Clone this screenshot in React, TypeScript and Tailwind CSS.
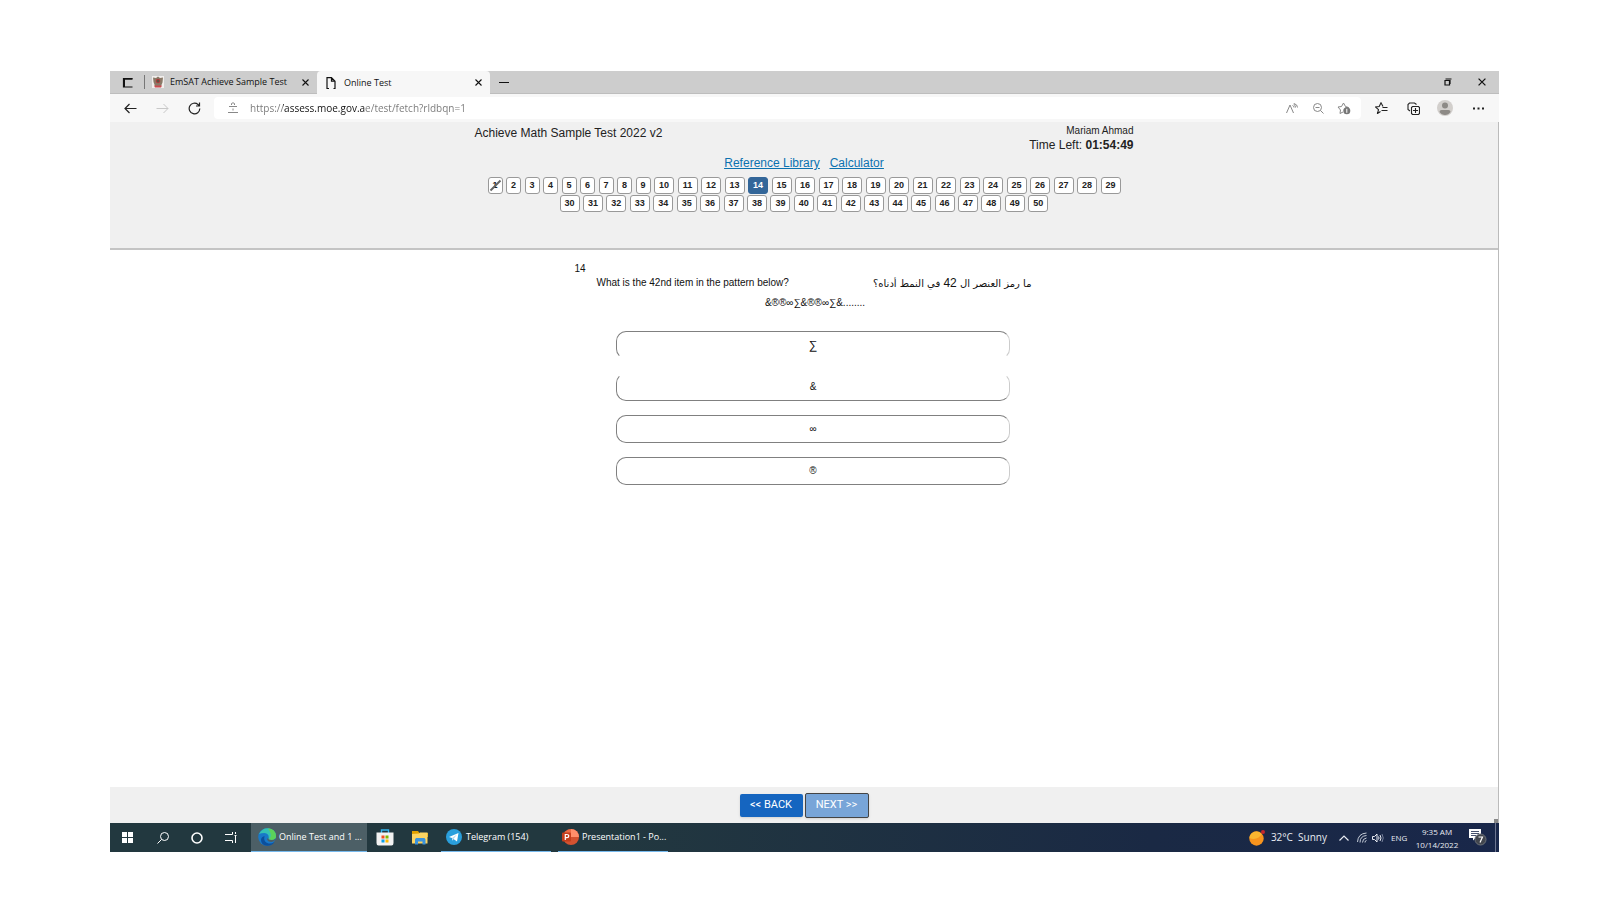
import { useState } from 'react';

const ANSWERS = ['∑', '&', '∞', '®'];

const range = (from: number, to: number) =>
  Array.from({ length: to - from + 1 }, (_, i) => from + i);

const iconProps = {
  fill: 'none',
  stroke: 'currentColor',
  strokeWidth: 1,
};

function CloseIcon({ size = 7 }: { size?: number }) {
  return (
    <svg width={size} height={size} viewBox="0 0 7 7" {...iconProps} strokeWidth={1.1}>
      <path d="M.5.5l6 6M6.5.5l-6 6" />
    </svg>
  );
}

function TabBar() {
  return (
    <div className="flex h-[23px] items-stretch border-b border-[#bdbdbd] bg-[#cdcdcd] text-[#111]">
      <button aria-label="Tab actions" className="flex w-[34px] items-center justify-center">
        <svg width="11" height="11" viewBox="0 0 11 11" {...iconProps}>
          <path d="M10.5 10H1.500V1.500H10.500" strokeWidth="1.200" />
          <path d="M1 2h9.500" strokeWidth="1.500" />
          <path d="M2.500 1.500v8.500" />
        </svg>
      </button>
      <div className="my-1 w-px bg-[#777]" />
      <div className="flex w-[172px] items-center pl-[7px] pr-1">
        <svg width="12" height="12" viewBox="0 0 12 12">
          <rect width="12" height="12" fill="#f1eeec" />
          <path d="M1 1.500l3 .5 2-1.500 2 1.500 3-.5-.5 5-1.500 3.500H3L1.500 6z" fill="#8a7a68" />
          <circle cx="6" cy="5" r="2.300" fill="#c33a3c" />
          <path d="M6 3.500v3M4.500 5h3" stroke="#3c5a46" />
          <path d="M2 9.500h8l-1 2H3z" fill="#cc4a50" />
        </svg>
        <span className="ml-[6px] flex-1 whitespace-nowrap">EmSAT Achieve Sample Test</span>
        <button aria-label="Close EmSAT Achieve Sample Test" className="p-1">
          <CloseIcon />
        </button>
      </div>
      <div className="-mb-px flex w-[173px] items-center rounded-t-sm bg-[#f7f7f7] pl-[9px] pr-1">
        <svg width="10" height="12" viewBox="0 0 10 12" {...iconProps} strokeWidth={1.2}>
          <path d="M3 11.500H1V.7H5.500L9 4.200V11.500H7.500M5.500.7V4.200H9" />
        </svg>
        <span className="ml-2 flex-1 whitespace-nowrap">Online Test</span>
        <button aria-label="Close Online Test" className="p-1">
          <CloseIcon />
        </button>
      </div>
      <button aria-label="New tab" className="flex w-[27px] items-center justify-center">
        <svg width="10" height="3" viewBox="0 0 10 3" {...iconProps}>
          <path d="M0 1.500h10" />
        </svg>
      </button>
      <div className="ml-auto flex items-stretch">
        <button aria-label="Restore" className="flex w-[34px] items-center justify-center">
          <svg width="8" height="8" viewBox="0 0 8 8" {...iconProps}>
            <path d="M1 2.500h4.500V7H1zM1.500 1H7.500M6 2v4" strokeWidth="1.200" />
          </svg>
        </button>
        <button aria-label="Close window" className="flex w-[34px] items-center justify-center">
          <CloseIcon size={8} />
        </button>
      </div>
    </div>
  );
}

function AddressBar() {
  const [url, setUrl] = useState('https://assess.moe.gov.ae/test/fetch?rldbqn=1');

  return (
    <div className="flex h-7 items-center bg-[#f7f7f7] text-[#222]">
      <button aria-label="Back" className="ml-1 flex w-8 justify-center">
        <svg width="13" height="11" viewBox="0 0 13 11" {...iconProps} strokeWidth={1.200}>
          <path d="M12.500 5.500H1M5.500 1L1 5.500 5.500 10" />
        </svg>
      </button>
      <button aria-label="Forward" className="flex w-8 justify-center text-[#c8c8c8]">
        <svg width="13" height="11" viewBox="0 0 13 11" {...iconProps}>
          <path d="M.5 5.500H12M7.500 1L12 5.500 7.500 10" />
        </svg>
      </button>
      <button aria-label="Refresh" className="flex w-8 justify-center">
        <svg width="13" height="13" viewBox="0 0 13 13" {...iconProps} strokeWidth={1.200}>
          <path d="M11.800 6.500A5.300 5.300 0 1 1 10 2.500L11 3.500M11.500.5V4H8" />
        </svg>
      </button>
      <div className="ml-1 flex h-[22px] flex-1 items-center rounded-sm bg-white pl-[14px] pr-1 text-[#888]">
        <svg width="10" height="12" viewBox="0 0 10 12" {...iconProps}>
          <path d="M3.500 3V1.500Q5 0 6.500 1.500V3M1 4.500h8M5 6.500v2M0 10.500h10" />
        </svg>
        <input
          aria-label="Address"
          value={url}
          onChange={(e) => setUrl(e.target.value)}
          className="ml-3 w-full flex-1 bg-[linear-gradient(90deg,#777_33px,#111_33px,#111_115px,#777_115px)] bg-clip-text text-[10px] text-transparent outline-none"
        />
        <button aria-label="Read aloud" className="flex w-[26px] justify-center">
          <svg width="12" height="11" viewBox="0 0 12 11" {...iconProps}>
            <path d="M.5 10L4 2l3.500 8M7.500 1q2 1 2 3.500M8 .5q3.500 1 3.500 4M6.500 2.500q1.500.5 1.500 2" />
          </svg>
        </button>
        <button aria-label="Zoom" className="flex w-[26px] justify-center">
          <svg width="11" height="11" viewBox="0 0 11 11" {...iconProps}>
            <circle cx="4.500" cy="4.500" r="4" />
            <path d="M2.500 4.500h4M7.500 7.500l3 3" />
          </svg>
        </button>
        <button aria-label="Add to favorites" className="flex w-[26px] justify-center">
          <svg width="14" height="13" viewBox="0 0 14 13" {...iconProps}>
            <path d="M8.500 5.500h3L8.500 4.500 6.500 1 4.500 4.500 1 5l2.500 3L3 11.500l3-1.500" />
            <circle cx="9.800" cy="8.800" r="3.500" fill="#777" stroke="none" />
            <path d="M9.800 6.800v4" stroke="#fff" />
          </svg>
        </button>
      </div>
      <div className="flex items-center pr-2">
        <button aria-label="Favorites" className="flex w-10 justify-center">
          <svg width="13" height="12" viewBox="0 0 13 12" {...iconProps} strokeWidth={1.100}>
            <path d="M8 4.500L6 .8 4.200 4.500.5 5l3 2.700L2.500 11.500 5.500 9.500M7.500 5.500h5M6.500 8.500h6" />
          </svg>
        </button>
        <button aria-label="Collections" className="flex w-6 justify-center">
          <svg width="13" height="13" viewBox="0 0 13 13" {...iconProps} strokeWidth={1.100}>
            <path d="M3 9L1 7.500V2.500L2.500 1h5L9.500 2.500M9 4.500h2.500L12.500 5.500v6l-1 1H5.500L4.500 11.500V5.500l1-1H9M8.500 6v5M6 8.500h5" />
          </svg>
        </button>
        <button aria-label="Profile" className="flex w-10 justify-center">
          <svg width="16" height="16" viewBox="0 0 16 16">
            <circle cx="8" cy="8" r="8" fill="#d2cfcc" />
            <circle cx="8" cy="5.500" r="3" fill="#8d8a86" />
            <path d="M2.500 12q0-2 2-2h7q2 0 2 2-2 3-5.500 3t-5.500-3z" fill="#8d8a86" />
          </svg>
        </button>
        <button aria-label="Settings and more" className="flex w-[26px] justify-center">
          <svg width="11" height="3" viewBox="0 0 11 3" fill="#222">
            <path d="M0 .5h2v2H0zM4.500.5h2v2h-2zM9 .5h2v2H9z" />
          </svg>
        </button>
      </div>
    </div>
  );
}

interface NumberRowProps {
  numbers: number[];
  current: number;
  onSelect: (n: number) => void;
}

function NumberButtons({ numbers, current, onSelect }: NumberRowProps) {
  return numbers.map((n) => (
    <button
      key={n}
      onClick={() => onSelect(n)}
      className={`relative flex h-[17px] items-center justify-center rounded-[3px] border text-[9px] font-bold ${
        n < 10 ? 'w-[15px]' : 'w-5'
      } ${
        n === current
          ? 'border-[#336699] bg-[#336699] text-white'
          : 'border-[#999] bg-white text-[#222]'
      }`}
    >
      {n}
      {n === 1 && (
        <svg className="absolute inset-0" width="13" height="15" viewBox="0 0 13 15">
          <path d="M1.500 12.500L11.500 2.500" stroke="#666" strokeWidth="2" />
        </svg>
      )}
    </button>
  ));
}

function TestHeader({ current, onSelect }: { current: number; onSelect: (n: number) => void }) {
  return (
    <header className="h-32 border-b-2 border-[#c4c4c4] bg-[#f0f0f0] text-[#222]">
      <div className="mx-auto flex max-w-[659px] justify-between text-xs leading-[14px]">
        <h1 className="pt-1">Achieve Math Sample Test 2022 v2</h1>
        <div className="pt-[2px] text-right">
          <p className="text-[10px] leading-[14px]">Mariam Ahmad</p>
          <p>
            Time Left: <b>01:54:49</b>
          </p>
        </div>
      </div>
      <nav className="mt-1 flex justify-center gap-[10px] text-xs leading-[14px] text-[#0b72b0] underline">
        <a href="#reference">Reference Library</a>
        <a href="#calculator">Calculator</a>
      </nav>
      <div className="mt-[7px] flex flex-col items-center gap-px">
        <div className="flex w-full max-w-[633px] justify-between">
          <NumberButtons numbers={range(1, 29)} current={current} onSelect={onSelect} />
        </div>
        <div className="flex w-full max-w-[489px] justify-between">
          <NumberButtons numbers={range(30, 50)} current={current} onSelect={onSelect} />
        </div>
      </div>
    </header>
  );
}

function Question({ number }: { number: number }) {
  return (
    <main className="flex-1 bg-white pt-3 text-[10px] leading-[14px] text-[#111]">
      <div className="mx-auto max-w-[459px]">
        <p>{number}</p>
        <div className="pl-[22px]">
          <div className="flex h-[14px] items-center justify-between">
            <p>What is the 42nd item in the pattern below?</p>
            <p dir="rtl" lang="ar" className="pr-[2px] font-['DejaVu_Sans',sans-serif]">
              ما رمز العنصر ال{' '}
              <span className="font-['Liberation_Sans',Arial,sans-serif] text-xs leading-[14px]">42</span> في
              النمط أدناه؟
            </p>
          </div>
          <p className="mt-[6px] text-center">&amp;®®∞∑&amp;®®∞∑&amp;........</p>
          <div className="mt-[21px] mr-1 flex flex-col items-center gap-[14px]">
            {ANSWERS.map((answer, i) => (
              <button
                key={answer}
                className={`h-7 w-full max-w-[394px] rounded-[10px] border border-[#808080] border-r-[#ccc] bg-white ${
                  i === 0 ? 'border-b-transparent text-xs' : ''
                } ${i === 1 ? 'border-t-transparent' : ''}`}
              >
                {answer}
              </button>
            ))}
          </div>
        </div>
      </div>
    </main>
  );
}

function Taskbar() {
  return (
    <div className="flex h-[29px] items-stretch bg-[linear-gradient(90deg,#22383f_0%,#22383f_35%,#1a2944_75%,#19274a_100%)] font-['Open_Sans',sans-serif] text-[9px] text-white">
      <button aria-label="Start" className="flex w-[35px] items-center justify-center">
        <svg width="11" height="11" viewBox="0 0 11 11" fill="#fff">
          <path d="M0 0h5v5H0zM6 0h5v5H6zM0 6h5v5H0zM6 6h5v5H6z" />
        </svg>
      </button>
      <button aria-label="Search" className="flex w-[35px] items-center justify-center">
        <svg width="12" height="12" viewBox="0 0 12 12" {...iconProps}>
          <circle cx="7.500" cy="4.500" r="4" />
          <path d="M4.500 7.500L.5 11.500" />
        </svg>
      </button>
      <button aria-label="Cortana" className="flex w-[34px] items-center justify-center">
        <svg width="12" height="12" viewBox="0 0 12 12" {...iconProps} strokeWidth={1.600}>
          <circle cx="6" cy="6" r="5" />
        </svg>
      </button>
      <button aria-label="Task view" className="flex w-[34px] items-center justify-center">
        <svg width="12" height="11" viewBox="0 0 12 11" {...iconProps}>
          <path d="M0 2.500h7.500V0M0 8.500h7.500V11M10.500 0v2M10.500 4v7M9.500 3.500h2" />
        </svg>
      </button>
      <button className="ml-[3px] flex w-[116px] items-center border-b border-[#76b9ed] bg-[#4c5f66] pl-[7px]">
        <svg width="18" height="18" viewBox="0 0 18 18">
          <circle cx="9" cy="9" r="8.800" fill="#1878c8" />
          <path d="M1 6Q4 0 10 .3q7.500.7 8 7.700 0 4-4.500 4-4 0-2.800-2.500Q11 5.500 6.500 5 3 5 1 6z" fill="#35c1b4" />
          <path d="M10 .3q7.500.7 8 7.700 0 4-4.500 4-1.500 0-2.500-.8Q15 8 10 .3z" fill="#5bd25a" />
          <path d="M6.500 8q-1.500 6 4 7.500 3 .5 6-1.500-2.500 4-7.500 3.800Q3 17 3 12q0-3 3.500-4z" fill="#0c4f9c" />
          <path d="M10.500 9.500q-1.200 2.500 3 2.500 2.500 0 4-1.500-.5 3-4 3.500-4 0-4.500-3z" fill="#4c5f66" />
        </svg>
        <span className="ml-[3px] whitespace-nowrap">Online Test and 1 ...</span>
      </button>
      <button aria-label="Microsoft Store" className="flex w-9 items-center justify-center">
        <svg width="18" height="17" viewBox="0 0 18 17">
          <path d="M5.500 4V1h7v3" fill="none" stroke="#35b5ee" strokeWidth="1.400" />
          <path d="M.5 3.500h17V14q0 2.500-2 2.500h-13q-2 0-2-2.500z" fill="#f2f2f2" />
          <path d="M5.500 6.500h3v3h-3z" fill="#f25022" />
          <path d="M9.500 6.500h3v3h-3z" fill="#7fba00" />
          <path d="M5.500 10.500h3v3h-3z" fill="#0a9fe8" />
          <path d="M9.500 10.500h3v3h-3z" fill="#ffb900" />
        </svg>
      </button>
      <button aria-label="File Explorer" className="flex w-[34px] items-center justify-center">
        <svg width="16" height="14" viewBox="0 0 16 14">
          <path d="M0 0h6l1.500 2H16v4H0z" fill="#e2a100" />
          <path d="M0 3l7-.5L8 1.500h7.500V12.500H0z" fill="#fcd462" />
          <path d="M3 13.500V8.500l1-1.500h8.500l1 1.500v5h-3V10.500h-4.500v3z" fill="#3b93dd" />
        </svg>
      </button>
      <button className="ml-1 flex w-[110px] items-center border-b border-[#76b9ed] pl-[5px]">
        <svg width="16" height="16" viewBox="0 0 16 16">
          <circle cx="8" cy="8" r="8" fill="#2a9fdc" />
          <path d="M3 8l9.500-4-1.500 8.500-3.500-2.500-1.500 1.500V9z" fill="#fff" />
          <path d="M6 9l5-3.500-3.500 4.500-1.500 1.500z" fill="#b8d9ee" />
        </svg>
        <span className="ml-1 whitespace-nowrap">Telegram (154)</span>
      </button>
      <button className="ml-[7px] flex w-[110px] items-center border-b border-[#76b9ed] pl-1">
        <svg width="17" height="16" viewBox="0 0 17 16">
          <circle cx="9" cy="8" r="8" fill="#d35230" />
          <path d="M9 0a8 8 0 0 1 8 8H9z" fill="#ff8f6b" />
          <path d="M1.200 8H9V0a8 8 0 0 0-7.800 8z" fill="#ed6c47" />
          <rect y="3.500" width="9" height="9" rx="1" fill="#c43e1c" />
          <path d="M3.300 11V5.500h1.500q2 0 2 1.600t-2 1.600H3.500" fill="none" stroke="#fff" strokeWidth="1.200" />
        </svg>
        <span className="ml-[3px] whitespace-nowrap">Presentation1 - Po...</span>
      </button>
      <div className="ml-auto flex items-center whitespace-nowrap text-[#e8ebf2]">
        <button className="flex items-center gap-[6px] text-[10px]">
          <svg width="16" height="16" viewBox="0 0 16 16">
            <circle cx="7.500" cy="8.500" r="7.200" fill="#f7941e" />
            <path d="M.4 8A7.200 7.200 0 0 1 13 4Q8 11 .4 8z" fill="#fbb62f" />
            <circle cx="14" cy="2" r="2" fill="#c4262e" />
          </svg>
          <span>32°C&nbsp; Sunny</span>
        </button>
        <button aria-label="Show hidden icons" className="ml-3 flex w-[10px] justify-center">
          <svg width="10" height="6" viewBox="0 0 10 6" {...iconProps} strokeWidth={1.200}>
            <path d="M.5 5.500L5 1l4.500 4.500" />
          </svg>
        </button>
        <button aria-label="Network" className="ml-2">
          <svg width="10" height="11" viewBox="0 0 10 11" {...iconProps} stroke="#c5ccd8">
            <path d="M.5 10Q1 1.500 9.500 1M3 10.500Q3 4 9.500 3.500M5.500 10.500Q5.500 6.500 9.500 6M8 10.500q0-2 1.500-2" />
          </svg>
        </button>
        <button aria-label="Volume" className="ml-[5px]">
          <svg width="13" height="10" viewBox="0 0 13 10" {...iconProps}>
            <path d="M.5 3.500h2L5 1v8L2.500 6.500h-2zM6.500 3.500q1 1.500 0 3M8 2q2 3 0 6" />
            <path d="M10 1q2.500 4 0 8" stroke="#76809a" />
          </svg>
        </button>
        <span className="ml-[6px] w-[18px] text-[8px]">ENG</span>
        <div className="ml-[6px] w-[44px] text-center text-[8px] leading-[13px]">
          <p>9:35 AM</p>
          <p>10/14/2022</p>
        </div>
        <button aria-label="Notifications" className="ml-[10px] mr-2">
          <svg width="18" height="17" viewBox="0 0 18 17">
            <path d="M0 0h12v9H6.500L4 11.500V9H0z" fill="#fff" />
            <path d="M2 2.500h8M2 4.500h8M2 6.500h5" stroke="#19274a" strokeWidth=".8" />
            <circle cx="11.500" cy="10.500" r="5.500" fill="#42464e" stroke="#6b7078" />
            <path d="M9.500 8h4l-2.500 5.500" fill="none" stroke="#fff" strokeWidth="1.200" />
          </svg>
        </button>
        <div className="mr-[3px] h-[29px] w-px bg-[#6d7690]" />
      </div>
    </div>
  );
}

export default function App() {
  const [current, setCurrent] = useState(14);

  return (
    <div className="flex min-h-screen flex-col bg-white pt-[71px] pr-[101px] pb-12 pl-[110px] font-['Liberation_Sans',Arial,sans-serif]">
      <div className="font-['Open_Sans',sans-serif] text-[9px]">
        <TabBar />
        <AddressBar />
      </div>
      <div className="flex flex-1 flex-col border-r border-[#bbb]">
        <TestHeader current={current} onSelect={setCurrent} />
        <Question number={current} />
        <footer className="relative flex h-9 items-center justify-center gap-[2px] bg-[#f0f0f0] pt-px font-['Roboto',sans-serif] text-[11px] text-white">
          <button
            onClick={() => setCurrent(Math.max(1, current - 1))}
            className="h-[23px] w-[63px] rounded-[2px] bg-[#1565c0] shadow"
          >
            &lt;&lt; BACK
          </button>
          <button
            onClick={() => setCurrent(Math.min(50, current + 1))}
            className="h-[25px] w-16 rounded-[2px] border border-[#444] bg-[#78a5d8] shadow"
          >
            NEXT &gt;&gt;
          </button>
          <div className="absolute right-0 bottom-0 size-1 bg-[#888]" />
        </footer>
      </div>
      <Taskbar />
    </div>
  );
}
